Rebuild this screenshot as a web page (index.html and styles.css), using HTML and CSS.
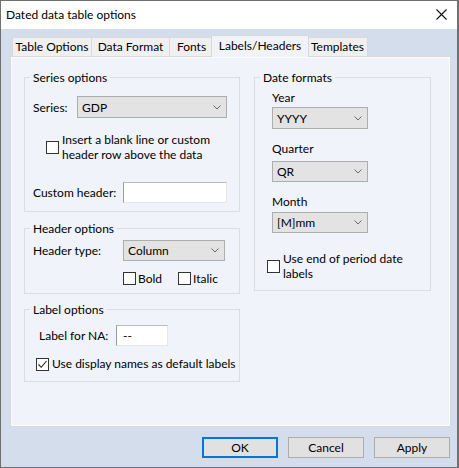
FILE: index.html
```html
<!DOCTYPE html>
<html>
<head>
<meta charset="utf-8">
<title>Dated data table options</title>
<link rel="stylesheet" href="styles.css">
</head>
<body>
<div class="window">
  <div class="titlebar">
    <span class="title">Dated data table options</span>
    <span class="close"><svg width="11" height="11" viewBox="0 0 11 11"><path d="M0.5 0.5L10.5 10.5M10.5 0.5L0.5 10.5" stroke="#111" stroke-width="1.1" fill="none"/></svg></span>
  </div>
  <div class="client">
    <div class="tabs">
      <div class="tab t-table">Table Options</div>
      <div class="tab t-data">Data Format</div>
      <div class="tab t-fonts">Fonts</div>
      <div class="tab active t-labels">Labels/Headers</div>
      <div class="tab t-templates">Templates</div>
    </div>
    <div class="panel">
      <div class="col-left">
        <fieldset class="group g-series">
          <legend>Series options</legend>
          <div class="row r-series">
            <span class="lbl w44">Series:</span>
            <div class="combo w150"><span>GDP</span><svg class="chev" width="8" height="5" viewBox="0 0 8 5"><path d="M0.5 0.5L4 4L7.5 0.5" stroke="#6a6a6a" fill="none"/></svg></div>
          </div>
          <div class="check-row r-insert">
            <span class="cb"></span>
            <span class="cb-text"><span class="ln">Insert a blank line or custom</span><span class="ln">header row above the data</span></span>
          </div>
          <div class="row r-custom">
            <span class="lbl w90">Custom header:</span>
            <div class="edit w104"></div>
          </div>
        </fieldset>
        <fieldset class="group g-header">
          <legend>Header options</legend>
          <div class="row r-htype">
            <span class="lbl w90">Header type:</span>
            <div class="combo w102"><span>Column</span><svg class="chev" width="8" height="5" viewBox="0 0 8 5"><path d="M0.5 0.5L4 4L7.5 0.5" stroke="#6a6a6a" fill="none"/></svg></div>
          </div>
          <div class="row r-style">
            <span class="check-inline w55"><span class="cb"></span><span>Bold</span></span>
            <span class="check-inline"><span class="cb"></span><span>Italic</span></span>
          </div>
        </fieldset>
        <fieldset class="group g-label">
          <legend>Label options</legend>
          <div class="row r-na">
            <span class="lbl w77">Label for NA:</span>
            <div class="edit w52">--</div>
          </div>
          <div class="check-row r-display">
            <span class="cb checked"><svg width="11" height="11" viewBox="0 0 11 11"><path d="M1.5 5.5L4.2 8.3L9.5 2" stroke="#222" stroke-width="1.1" fill="none"/></svg></span>
            <span class="cb-text nowrap">Use display names as default labels</span>
          </div>
        </fieldset>
      </div>
      <div class="col-right">
        <fieldset class="group g-date">
          <legend>Date formats</legend>
          <div class="dlabel d-year">Year</div>
          <div class="combo w96 dcombo c-year"><span>YYYY</span><svg class="chev" width="8" height="5" viewBox="0 0 8 5"><path d="M0.5 0.5L4 4L7.5 0.5" stroke="#6a6a6a" fill="none"/></svg></div>
          <div class="dlabel d-next">Quarter</div>
          <div class="combo w96 dcombo c-next"><span>QR</span><svg class="chev" width="8" height="5" viewBox="0 0 8 5"><path d="M0.5 0.5L4 4L7.5 0.5" stroke="#6a6a6a" fill="none"/></svg></div>
          <div class="dlabel d-next">Month</div>
          <div class="combo w96 dcombo c-month"><span>[M]mm</span><svg class="chev" width="8" height="5" viewBox="0 0 8 5"><path d="M0.5 0.5L4 4L7.5 0.5" stroke="#6a6a6a" fill="none"/></svg></div>
          <div class="check-row r-end">
            <span class="cb"></span>
            <span class="cb-text"><span class="ln">Use end of period date</span><span class="ln">labels</span></span>
          </div>
        </fieldset>
      </div>
    </div>
    <div class="buttons">
      <button class="btn default">OK</button>
      <button class="btn">Cancel</button>
      <button class="btn">Apply</button>
    </div>
  </div>
</div>
</body>
</html>
```

FILE: styles.css
```css
* { box-sizing: border-box; }
html, body { margin: 0; padding: 0; }
body {
  font-family: "Lato", "Noto Sans", sans-serif;
  font-size: 12px;
  color: #000;
  background: #5f5f5f;
}
.window {
  width: 459px;
  height: 468px;
  border: 1px solid #707070;
  border-right-width: 2px;
  display: flex;
  flex-direction: column;
  background: #d3ddec;
}
.titlebar {
  flex: none;
  height: 28px;
  background: #fff;
  display: flex;
  align-items: center;
  justify-content: space-between;
  padding: 0 10px 1px 5px;
}
.close { display: flex; }
.client {
  flex: 1;
  display: flex;
  flex-direction: column;
  padding: 6px 6px 9px 9px;
}
.tabs {
  display: flex;
  align-items: flex-end;
  height: 21px;
  padding-left: 2px;
}
.tab {
  height: 19px;
  line-height: 18px;
  padding: 0;
  text-align: center;
  background: #f0f0f0;
  border: 1px solid #d9d9d9;
  border-bottom: none;
  margin-right: -1px;
  white-space: nowrap;
}
.t-table { width: 80px; }
.t-data { width: 79px; }
.t-fonts { width: 45px; }
.t-labels { width: 98px; }
.t-templates { width: 61px; }
.tab.active {
  height: 22px;
  line-height: 20px;
  margin: 0 -2px -1px -2px;
  background: #f0f3f9;
  position: relative;
  z-index: 1;
}
.panel {
  height: 371px;
  background: #f0f3f9;
  border: 1px solid #d9d9d9;
  box-shadow: inset 0 0 0 1px #fbfcfe;
  display: grid;
  grid-template-columns: 216px 177px;
  column-gap: 14px;
  align-items: start;
  padding: 13px 0 0 13px;
}
.group {
  margin: 0;
  padding: 0 8px 8px 8px;
  border: 1px solid #dadde2;
  min-width: 0;
}
.group legend {
  padding: 0 3px;
  margin-left: -3px;
  line-height: 15px;
}
.row {
  display: flex;
  align-items: center;
}
.lbl { flex: none; }
.w44 { width: 44px; }
.w90 { width: 90px; }
.w77 { width: 77px; }
.w55 { width: 55px; }
.w150 { width: 150px; }
.w104 { width: 104px; }
.w102 { width: 102px; }
.w96 { width: 96px; }
.w52 { width: 52px; }
.combo {
  flex: none;
  height: 21px;
  display: flex;
  align-items: center;
  justify-content: space-between;
  padding: 0 5px 0 4px;
  background: #e3e3e3;
  border: 1px solid #adadad;
}
.chev { flex: none; }
.edit {
  flex: none;
  height: 21px;
  background: #fff;
  border: 1px solid #e6e6e6;
  border-left-color: #9c9c9c;
  border-top-color: #b9b9b9;
  padding: 0 6px;
  line-height: 19px;
}
.cb {
  flex: none;
  width: 13px;
  height: 13px;
  border: 1px solid #333;
  background: #fff;
  display: flex;
}
.check-row {
  display: flex;
  align-items: center;
  gap: 3px;
}
.cb-text { line-height: 14.5px; }
.ln { display: block; height: 14.5px; white-space: nowrap; }
.nowrap { white-space: nowrap; }
.check-inline {
  display: flex;
  align-items: center;
  gap: 2px;
}
/* Series options */
.g-series { padding-bottom: 8px; }
.r-series { margin-top: 11px; }
.r-series .combo { height: 22px; }
.r-insert { margin-top: 15px; margin-left: 13px; }
.r-custom { margin-top: 20px; }
/* Header options */
.g-header { margin-top: 9px; padding-bottom: 8px; }
.r-htype { margin-top: 4px; }
.r-style { margin-top: 11px; margin-left: 90px; height: 13px; }
/* Label options */
.g-label { margin-top: 8px; padding-bottom: 9px; }
.r-na { margin-top: 8px; margin-left: 6px; }
.r-display { margin-top: 11px; margin-left: 3px; height: 15px; }
/* Date formats */
.g-date { padding-bottom: 9px; }
.dlabel { line-height: 15px; margin-left: 9px; }
.d-year { margin-top: 5px; }
.d-next { margin-top: 12px; }
.dcombo { margin-left: 9px; }
.c-year { margin-top: 2px; height: 22px; }
.c-next { margin-top: 5px; }
.c-month { margin-top: 3px; }
.r-end { margin-top: 19px; margin-left: 4px; }
/* Buttons */
.buttons {
  display: flex;
  justify-content: flex-end;
  gap: 10px;
  margin-top: 10px;
  padding-right: 1px;
}
.btn {
  width: 76px;
  height: 21px;
  margin: 0;
  padding: 0;
  font-family: inherit;
  font-size: 12px;
  color: #000;
  background: #e1e1e1;
  border: 1px solid #adadad;
}
.btn.default {
  border-color: #0078d7;
  box-shadow: inset 0 0 0 1px #0078d7;
}
```
